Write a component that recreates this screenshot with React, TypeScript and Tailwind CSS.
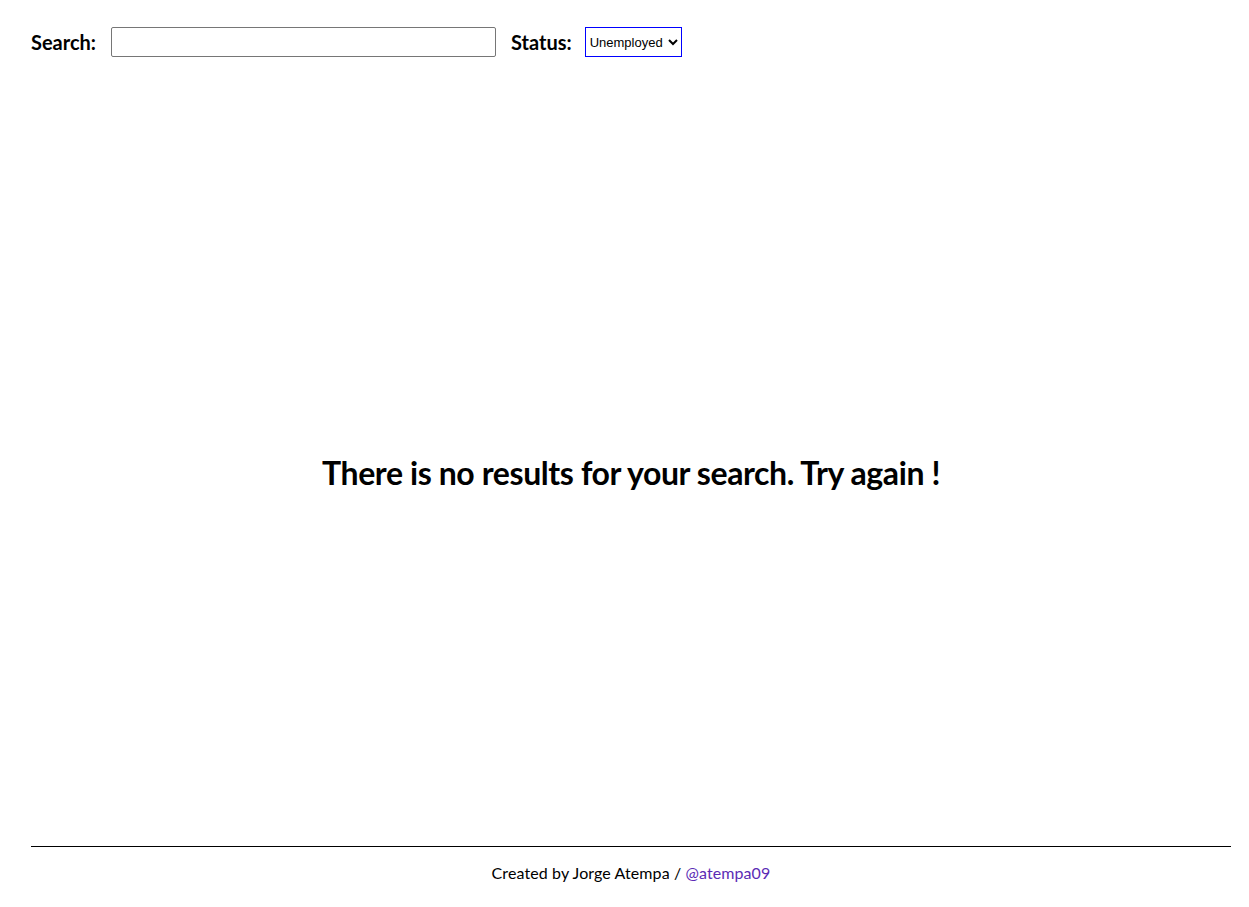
import React from "react";

export default function App() {
  return (
    <div className="flex h-[907px] flex-col bg-white pl-[31px] pr-[18px] text-black" style={{ fontFamily: "Lato, 'Open Sans', sans-serif" }}>
      <header className="flex items-center pt-[27px]">
        <label className="text-[20px] font-bold">Search:</label>
        <input type="text" className="ml-[15px] h-[30px] w-[385px] rounded-[2px] border border-[#767676] px-2 text-[13px]" />
        <label className="ml-[15px] text-[20px] font-bold">Status:</label>
        <select
          defaultValue="Unemployed"
          className="ml-[13px] h-[30px] w-[97px] border border-[#0000ff] bg-white px-0 text-[13px]"
          style={{ fontFamily: "'Liberation Sans', Arial, sans-serif", appearance: "auto" }}
        >
          <option>Unemployed</option>
          <option>Employed</option>
        </select>
      </header>
      <main className="flex flex-1 items-center justify-center pt-[42px]">
        <h1 className="text-[32px] font-bold tracking-[-0.4px]">There is no results for your search. Try again !</h1>
      </main>
      <footer className="flex h-[61px] items-start justify-center border-t border-black pt-[14px] text-[16px] tracking-[0.1px]">
        <span>
          Created by Jorge Atempa / <a className="text-[#5b2bb5]">@atempa09</a>
        </span>
      </footer>
    </div>
  );
}
